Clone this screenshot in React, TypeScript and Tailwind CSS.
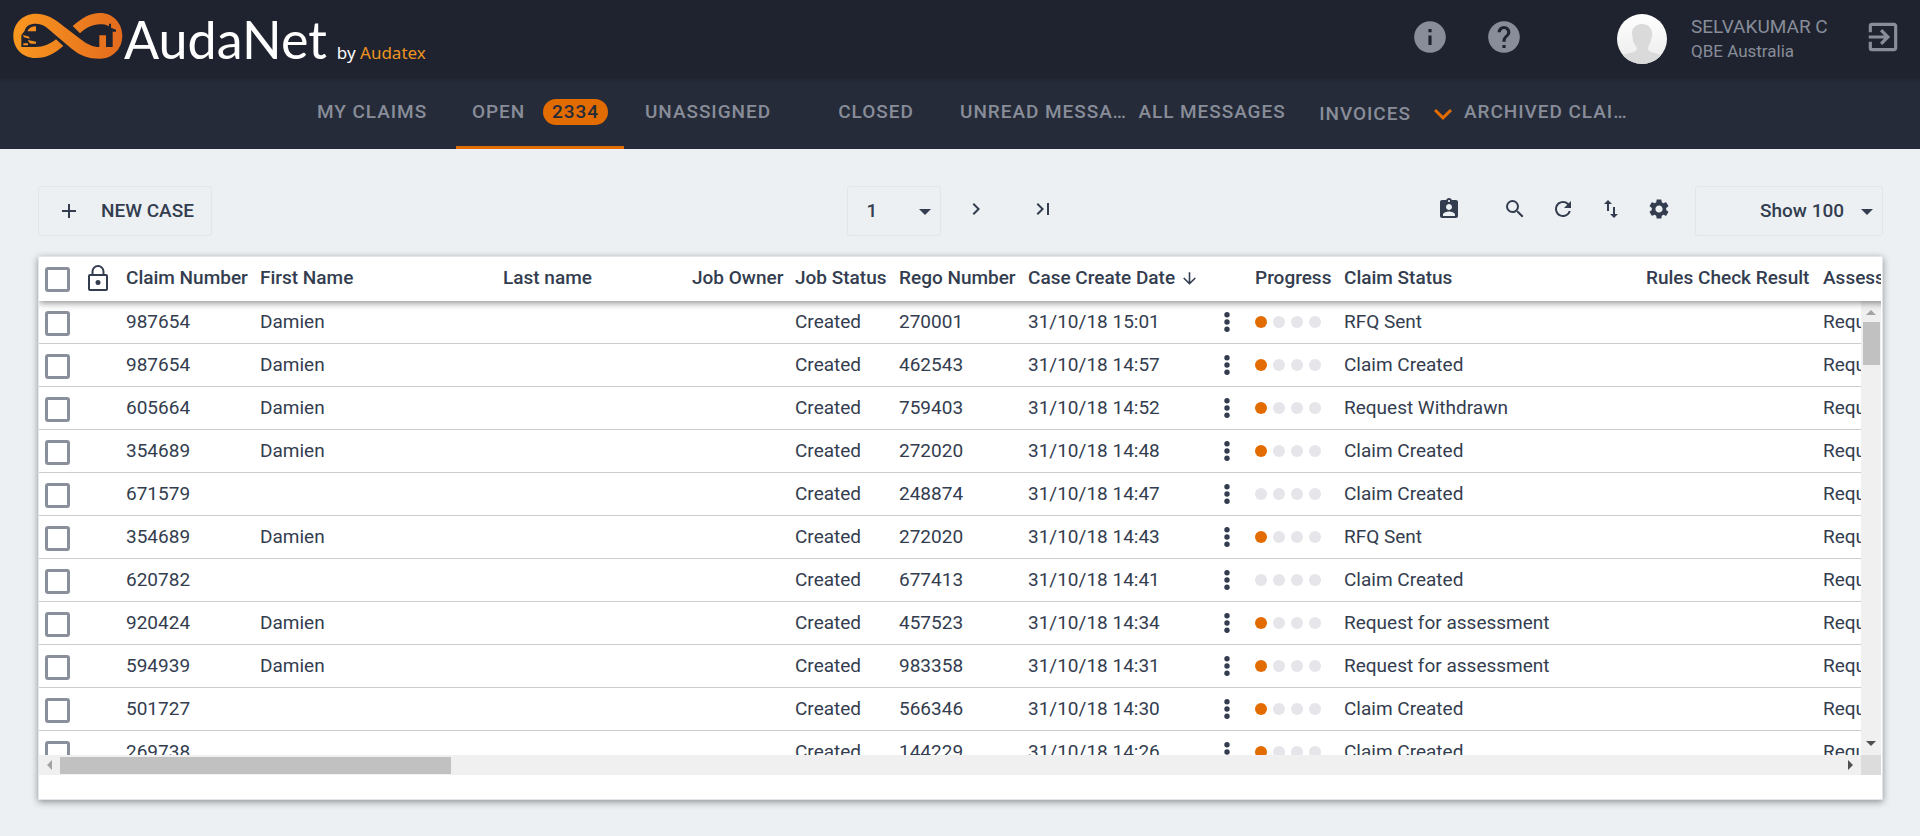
import type { ReactNode } from "react";
import {
  MdAdd,
  MdArrowDownward,
  MdAssignmentInd,
  MdChevronRight,
  MdExitToApp,
  MdExpandMore,
  MdHelp,
  MdImportExport,
  MdInfo,
  MdLastPage,
  MdRefresh,
  MdSearch,
  MdSettings,
} from "react-icons/md";

type Claim = {
  number: string;
  first: string;
  rego: string;
  created: string;
  progress: number;
  status: string;
};

const claims: Claim[] = [
  { number: "987654", first: "Damien", rego: "270001", created: "31/10/18 15:01", progress: 1, status: "RFQ Sent" },
  { number: "987654", first: "Damien", rego: "462543", created: "31/10/18 14:57", progress: 1, status: "Claim Created" },
  { number: "605664", first: "Damien", rego: "759403", created: "31/10/18 14:52", progress: 1, status: "Request Withdrawn" },
  { number: "354689", first: "Damien", rego: "272020", created: "31/10/18 14:48", progress: 1, status: "Claim Created" },
  { number: "671579", first: "", rego: "248874", created: "31/10/18 14:47", progress: 0, status: "Claim Created" },
  { number: "354689", first: "Damien", rego: "272020", created: "31/10/18 14:43", progress: 1, status: "RFQ Sent" },
  { number: "620782", first: "", rego: "677413", created: "31/10/18 14:41", progress: 0, status: "Claim Created" },
  { number: "920424", first: "Damien", rego: "457523", created: "31/10/18 14:34", progress: 1, status: "Request for assessment" },
  { number: "594939", first: "Damien", rego: "983358", created: "31/10/18 14:31", progress: 1, status: "Request for assessment" },
  { number: "501727", first: "", rego: "566346", created: "31/10/18 14:30", progress: 1, status: "Claim Created" },
  { number: "269738", first: "", rego: "144229", created: "31/10/18 14:26", progress: 1, status: "Claim Created" },
];

function Logo() {
  return (
    <a href="#home" className="flex items-end" aria-label="AudaNet by Audatex">
      <svg viewBox="36 38 336 144" className="mb-[9px] h-12 w-28" aria-hidden="true">
        <defs>
          <linearGradient id="band" x1="0" x2="1" y1="0" y2="0">
            <stop offset="0" stopColor="#f9981f" />
            <stop offset="1" stopColor="#e46b1e" />
          </linearGradient>
        </defs>
        <path
          fill="url(#band)"
          d="M168 120 L190 140 C165 162 140 176 107 176 C66 176 40 146 40 110 C40 72 68 43 108 43 C140 43 163 58 185 76 L245 122 C262 135 278 143 298 143 L298 108 L318 108 L318 143 L338 143 L338 97 L348 97 L348 91 L333 85 L333 73 L327 73 L327 81 C318 76 310 75 300 75 C276 75 258 86 240 102 L218 80 C245 57 270 41 300 41 C340 41 367 72 367 110 C367 148 338 178 300 178 C262 178 240 168 215 148 L160 102 C142 84 128 73 108 73 C88 73 78 80 74 94 L64 108 L64 143 L107 143 C130 143 150 135 168 120 Z"
        />
        <path fill="#f68f1f" d="M82 96 C87 86 95 81 108 81 L108 96 Z M68 107 L84 111 Q90 113 89 118 L72 114 Z M84 122 L108 127 L108 133 L92 133 Q85 130 84 122 Z M70 132 H84 V138 H70 Z" />
      </svg>
      <span className="font-['Lato'] text-[52px] leading-[60px] text-white">AudaNet</span>
      <span className="ml-[10px] pb-1 font-['Noto_Sans'] text-[17px] leading-6 text-white">
        by <span className="text-[#ee9320]">Audatex</span>
      </span>
    </a>
  );
}

function Tab({ children, active = false }: { children: ReactNode; active?: boolean }) {
  return (
    <a
      href="#tab"
      aria-current={active ? "page" : undefined}
      className={
        active
          ? "flex w-[168px] items-center justify-center gap-[18px] border-b-3 border-[#e36c00]"
          : "flex w-[168px] items-center justify-center border-b-3 border-transparent"
      }
    >
      {children}
    </a>
  );
}

function Caret() {
  return (
    <svg viewBox="0 0 12 6" className="pointer-events-none absolute top-[23px] right-[10px] h-[6px] w-3" aria-hidden="true">
      <path fill="#333d4f" d="M0 0H12L6 6Z" />
    </svg>
  );
}

function IconButton({ label, children }: { label: string; children: ReactNode }) {
  return (
    <button type="button" aria-label={label} className="flex h-12 w-12 items-center justify-center text-2xl">
      {children}
    </button>
  );
}

function Check({ label }: { label: string }) {
  return (
    <input
      type="checkbox"
      aria-label={label}
      className="mt-[3px] block h-[25px] w-[25px] appearance-none rounded-[3px] border-3 border-[#8a8f9c]"
    />
  );
}

function Progress({ done }: { done: number }) {
  return (
    <div className="flex gap-[6px]" role="img" aria-label={`Step ${done} of 4`}>
      {[0, 1, 2, 3].map((i) => (
        <span key={i} className={i < done ? "h-3 w-3 rounded-full bg-[#e36c00]" : "h-3 w-3 rounded-full bg-[#e5e5ea]"} />
      ))}
    </div>
  );
}

export default function App() {
  return (
    <div className="flex h-screen flex-col bg-[#ecf0f3] font-['Roboto',sans-serif] text-[19px] leading-7 text-[#333d4f]">
      <header className="relative z-10 flex h-[78px] shrink-0 items-center justify-between bg-[#1e232f] pr-[18px] pl-3 shadow-[0_1px_3px_rgba(0,0,0,0.2)]">
        <Logo />
        <div className="flex items-center text-[#888d99]">
          <button type="button" aria-label="Information" className="flex w-[74px] justify-center pb-1 text-[38px]">
            <MdInfo />
          </button>
          <button type="button" aria-label="Help" className="flex w-[74px] justify-center pb-1 text-[38px]">
            <MdHelp />
          </button>
          <svg viewBox="0 0 50 50" className="ml-[76px] h-[50px] w-[50px]" aria-hidden="true">
            <defs>
              <linearGradient id="face" x1="0" x2="0" y1="0" y2="1">
                <stop offset="0" stopColor="#ffffff" />
                <stop offset="1" stopColor="#ebebeb" />
              </linearGradient>
              <clipPath id="round">
                <circle cx="25" cy="25" r="25" />
              </clipPath>
            </defs>
            <g clipPath="url(#round)">
              <rect width="50" height="50" fill="url(#face)" />
              <path
                fill="#dadada"
                d="M25 10 C31 10 35 14 35 19 C36 22 34 24 34 27 C33 30 31 32 31 34 C31 39 36 38 44 41 L48 50 H2 L6 41 C14 38 20 39 20 34 C19 32 17 30 16 27 C16 24 15 22 15 19 C15 14 19 10 25 10 Z"
              />
            </g>
          </svg>
          <div className="ml-6 w-[173px] leading-[25px]">
            <div>SELVAKUMAR C</div>
            <div className="text-[17px]">QBE Australia</div>
          </div>
          <button type="button" aria-label="Log out" className="pb-1 text-[38px]">
            <MdExitToApp />
          </button>
        </div>
      </header>

      <nav className="flex h-[71px] shrink-0 justify-center bg-[#252b38] font-medium tracking-wider text-[#888d99]">
        <Tab>MY CLAIMS</Tab>
        <Tab active>
          OPEN
          <span className="rounded-full bg-[#e36c00] px-[9px] leading-[26px] text-[#252b38]">2334</span>
        </Tab>
        <Tab>UNASSIGNED</Tab>
        <Tab>CLOSED</Tab>
        <Tab>
          <span className="truncate">UNREAD MESSAGES</span>
        </Tab>
        <Tab>ALL MESSAGES</Tab>
        <Tab>
          <span className="ml-5 flex items-center gap-[14px] pt-1">
            INVOICES
            <MdExpandMore className="text-[36px] text-[#e36c00]" />
          </span>
        </Tab>
        <Tab>
          <span className="truncate">ARCHIVED CLAIMS</span>
        </Tab>
      </nav>

      <main className="flex min-h-0 flex-1 flex-col pt-[37px] pr-[37px] pb-9 pl-[38px]">
        <div className="grid shrink-0 grid-cols-[1fr_auto_1fr] font-medium">
          <button
            type="button"
            className="flex h-[50px] w-[174px] items-center gap-5 rounded-[3px] border border-[#e2e5ea] pl-[18px]"
          >
            <MdAdd className="text-2xl" />
            NEW CASE
          </button>
          <div className="flex gap-[3px]">
            <div className="relative">
              <select
                aria-label="Page"
                className="h-[50px] w-[94px] appearance-none rounded-[3px] border border-[#e2e5ea] pl-[19px]"
              >
                <option>1</option>
              </select>
              <Caret />
            </div>
            <button type="button" aria-label="Next page" className="flex h-[46px] w-16 items-center justify-center text-2xl">
              <MdChevronRight />
            </button>
            <button type="button" aria-label="Last page" className="flex h-[46px] w-16 items-center justify-center text-2xl">
              <MdLastPage />
            </button>
          </div>
          <div className="flex justify-end">
            <div className="mr-3 flex h-[46px] items-center">
              <div className="mr-[18px]">
                <IconButton label="Assigned to">
                  <MdAssignmentInd />
                </IconButton>
              </div>
              <IconButton label="Search">
                <MdSearch />
              </IconButton>
              <IconButton label="Refresh">
                <MdRefresh />
              </IconButton>
              <IconButton label="Sort">
                <MdImportExport />
              </IconButton>
              <IconButton label="Settings">
                <MdSettings />
              </IconButton>
            </div>
            <div className="relative">
              <select
                aria-label="Rows per page"
                className="h-[50px] w-[188px] appearance-none rounded-[3px] border border-[#e2e5ea] pl-16"
              >
                <option>Show 100</option>
              </select>
              <Caret />
            </div>
          </div>
        </div>

        <section className="mt-5 grid min-h-0 flex-1 grid-cols-[minmax(0,1fr)_20px] grid-rows-[44px_minmax(0,1fr)_20px] border border-[#e2e5ea] bg-white pr-px pb-6 shadow-[0_2px_7px_rgba(0,0,0,0.4)]">
          <div className="col-span-2 col-start-1 row-span-2 row-start-1 overflow-hidden">
            <table className="w-[2400px] table-fixed border-separate border-spacing-0 text-left whitespace-nowrap">
              <colgroup>
                <col className="w-[49px]" />
                <col className="w-[38px]" />
                <col className="w-[134px]" />
                <col className="w-[243px]" />
                <col className="w-[189px]" />
                <col className="w-[103px]" />
                <col className="w-[104px]" />
                <col className="w-[129px]" />
                <col className="w-[190px]" />
                <col className="w-[37px]" />
                <col className="w-[89px]" />
                <col className="w-[302px]" />
                <col className="w-[177px]" />
                <col />
              </colgroup>
              <thead className="relative z-10 bg-white shadow-[0_2px_7px_rgba(0,0,0,0.45)]">
                <tr className="h-11 [&>th]:p-0 [&>th]:pb-[2px] [&>th]:font-medium">
                  <th>
                    <div className="pl-[6px]">
                      <Check label="Select all claims" />
                    </div>
                  </th>
                  <th aria-label="Locked">
                    <svg viewBox="0 0 20 26" className="h-[26px] w-5" fill="none" stroke="#333d4f" strokeWidth="2" aria-hidden="true">
                      <rect x="1" y="10" width="18" height="15" rx="1" />
                      <path d="M4.5 10V6.5a5.5 5.5 0 0 1 11 0V10" />
                      <circle cx="10" cy="17.500" r="2.500" fill="#333d4f" stroke="none" />
                    </svg>
                  </th>
                  <th>Claim Number</th>
                  <th>First Name</th>
                  <th>Last name</th>
                  <th>Job Owner</th>
                  <th>Job Status</th>
                  <th>Rego Number</th>
                  <th>
                    <span className="flex items-center gap-[5px]">
                      Case Create Date
                      <MdArrowDownward />
                    </span>
                  </th>
                  <th aria-label="Actions" />
                  <th>Progress</th>
                  <th>Claim Status</th>
                  <th>Rules Check Result</th>
                  <th>Assessment Type</th>
                </tr>
              </thead>
              <tbody>
                {claims.map((c, i) => (
                  <tr key={i} className="h-[43px] [&>td]:border-b [&>td]:border-[#cccccc] [&>td]:p-0">
                    <td>
                      <div className="pl-[6px]">
                        <Check label={`Select claim ${c.number}`} />
                      </div>
                    </td>
                    <td />
                    <td>{c.number}</td>
                    <td>{c.first}</td>
                    <td />
                    <td />
                    <td>Created</td>
                    <td>{c.rego}</td>
                    <td>{c.created}</td>
                    <td>
                      <button type="button" aria-label="Claim actions" className="block">
                        <svg viewBox="0 0 6 20" className="ml-[6px] h-5 w-[6px]" fill="#333d4f" aria-hidden="true">
                          <circle cx="3" cy="2.700" r="2.700" />
                          <circle cx="3" cy="10" r="2.700" />
                          <circle cx="3" cy="17.300" r="2.700" />
                        </svg>
                      </button>
                    </td>
                    <td>
                      <Progress done={c.progress} />
                    </td>
                    <td>{c.status}</td>
                    <td />
                    <td>Request</td>
                  </tr>
                ))}
              </tbody>
            </table>
          </div>
          <div className="col-start-2 row-start-2 flex flex-col items-center bg-[#f0f0f0]" aria-hidden="true">
            <svg viewBox="0 0 20 21" className="h-[21px] w-5 shrink-0">
              <path fill="#a3a3a3" d="M5 14H15L10 9Z" />
            </svg>
            <div className="h-[43px] w-[17px] shrink-0 bg-[#c1c1c1]" />
            <div className="flex-1" />
            <svg viewBox="0 0 20 20" className="h-5 w-5 shrink-0">
              <path fill="#505050" d="M5 6H15L10 11Z" />
            </svg>
          </div>
          <div className="col-start-1 row-start-3 flex items-center bg-[#f0f0f0]" aria-hidden="true">
            <svg viewBox="0 0 21 20" className="h-5 w-[21px] shrink-0">
              <path fill="#a3a3a3" d="M13 5V15L8 10Z" />
            </svg>
            <div className="h-[17px] w-[391px] bg-[#c1c1c1]" />
            <div className="flex-1" />
            <svg viewBox="0 0 20 20" className="h-5 w-5 shrink-0">
              <path fill="#505050" d="M7 5V15L12 10Z" />
            </svg>
          </div>
          <div className="col-start-2 row-start-3 bg-[#dcdcdc]" />
        </section>
      </main>
    </div>
  );
}
